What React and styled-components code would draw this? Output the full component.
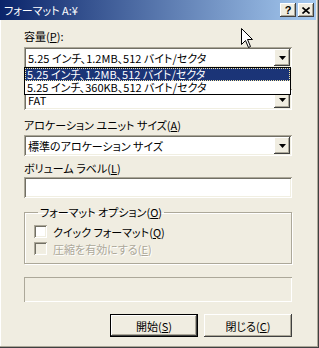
import React from 'react';
import styled, { createGlobalStyle } from 'styled-components';

const FACE = '#f0ede1';

const GlobalStyle = createGlobalStyle`
  html, body { margin: 0; padding: 0; background: ${FACE}; }
  body {
    font-family: "Noto Sans CJK JP", "Noto Sans", sans-serif;
    font-size: 11px;
    font-feature-settings: "palt";
    color: #000;
  }
`;

const Window = styled.div`
  position: relative;
  width: 319px;
  height: 348px;
  box-sizing: border-box;
  padding: 0 3px 3px 0;
  background: ${FACE};
  box-shadow: inset -1px -1px #404040, inset -2px -2px #aca899, inset 1px 0 #fff;
  display: flex;
  flex-direction: column;
  overflow: hidden;
`;

const TitleBar = styled.div`
  flex: none;
  height: 20px;
  display: flex;
  align-items: center;
  padding: 0 2px 0 4px;
  background: linear-gradient(to right, #0a246a, #a6caf0);
`;

const Title = styled.span`
  flex: 1;
  color: #fff;
  font-size: 11px;
  line-height: 20px;
`;

const raised = `
  box-shadow: inset -1px -1px #404040, inset 1px 1px #fff,
    inset -2px -2px #aca899, inset 2px 2px ${FACE};
`;

const CaptionButton = styled.button`
  width: 16px;
  height: 14px;
  padding: 0;
  margin-left: ${(p) => p.$gap || 0}px;
  border: none;
  background: ${FACE};
  ${raised}
  font: bold 11px "Liberation Sans", sans-serif;
  display: flex;
  align-items: center;
  justify-content: center;
  color: #000;
`;

const Body = styled.div`
  width: 268px;
  padding: 9px 0 0 24px;
  display: flex;
  flex-direction: column;
`;

const Label = styled.div`
  line-height: 14px;
  height: 14px;
  white-space: nowrap;
  margin-top: ${(p) => p.$mt || 0}px;
  margin-bottom: ${(p) => p.$mb ?? 3}px;
`;

const sunken = `
  box-shadow: inset 1px 1px #aca899, inset -1px -1px #fff,
    inset 2px 2px #716f64, inset -2px -2px #f1efe2;
`;

const Combo = styled.div`
  position: relative;
  height: 21px;
  box-sizing: border-box;
  padding: 2px;
  background: #fff;
  ${sunken}
  display: flex;
  align-items: center;
  z-index: ${(p) => (p.$open ? 2 : 1)};
`;

const ComboText = styled.span`
  flex: 1;
  padding-left: 2px;
  white-space: nowrap;
  overflow: hidden;
`;

const ArrowButton = styled.div`
  width: 16px;
  height: 17px;
  background: ${FACE};
  ${raised}
  display: flex;
  align-items: center;
  justify-content: center;
`;

const DropList = styled.div`
  position: absolute;
  top: 20px;
  left: 0;
  right: 1px;
  background: #fff;
  border: 1px solid #000;
  display: flex;
  flex-direction: column;
`;

const ListItem = styled.div`
  height: 13px;
  line-height: 13px;
  padding: 0 1px;
  white-space: nowrap;
  box-sizing: border-box;
  border: 1px dotted ${(p) => (p.$selected ? '#f6e7a0' : 'transparent')};
  background: ${(p) => (p.$selected ? '#1b3477' : '#fff')};
  color: ${(p) => (p.$selected ? '#fff' : '#000')};
  display: flex;
  align-items: center;
`;

const TextBox = styled.div`
  height: 21px;
  box-sizing: border-box;
  background: #fff;
  ${sunken}
`;

const Group = styled.fieldset`
  margin: 7px 0 0 0;
  padding: 6px 0 0 9px;
  height: 59px;
  box-sizing: border-box;
  min-inline-size: 0;
  border: 1px solid #aca899;
  box-shadow: 1px 1px 0 #fff, inset 1px 1px 0 #fff;
  display: flex;
  flex-direction: column;
  gap: 4px;
`;

const Legend = styled.legend`
  padding: 0 2px;
  margin-left: 4px;
  line-height: 14px;
`;

const CheckRow = styled.div`
  display: flex;
  align-items: center;
  height: 13px;
  gap: 6px;
  color: ${(p) => (p.$disabled ? '#aca899' : '#000')};
  text-shadow: ${(p) => (p.$disabled ? '1px 1px 0 #fff' : 'none')};
`;

const CheckBox = styled.span`
  width: 13px;
  height: 13px;
  box-sizing: border-box;
  flex: none;
  background: ${(p) => (p.$disabled ? FACE : '#fff')};
  ${sunken}
`;

const Progress = styled.div`
  margin-top: 13px;
  height: 25px;
  box-shadow: inset 1px 1px #aca899, inset -1px -1px #fff;
`;

const ButtonRow = styled.div`
  margin-top: 12px;
  display: flex;
  justify-content: flex-end;
  gap: 6px;
`;

const PushButton = styled.button`
  width: 88px;
  height: 23px;
  padding: 0;
  font: inherit;
  font-size: 11px;
  color: #000;
  background: ${FACE};
  border: ${(p) => (p.$default ? '1px solid #000' : 'none')};
  box-sizing: border-box;
  ${raised}
  cursor: default;
`;

const Cursor = styled.svg`
  position: absolute;
  left: 241px;
  top: 28px;
  z-index: 5;
`;

function Arrow() {
  return (
    <svg width="7" height="4" viewBox="0 0 7 4">
      <path d="M0 0h7L3.5 4z" fill="#000" />
    </svg>
  );
}

export default function App() {
  return (
    <Window>
      <GlobalStyle />
      <TitleBar>
        <Title>フォーマット A:¥</Title>
        <CaptionButton>?</CaptionButton>
        <CaptionButton $gap={2}>
          <svg width="8" height="7" viewBox="0 0 8 7">
            <path d="M0.5 0.5L7.5 6.5M7.5 0.5L0.5 6.5" stroke="#000" strokeWidth="1.6" />
          </svg>
        </CaptionButton>
      </TitleBar>

      <Body>
        <Label $mb={4}>
          容量(<u>P</u>):
        </Label>
        <Combo $open>
          <ComboText>5.25 インチ、1.2MB、512 バイト/セクタ</ComboText>
          <ArrowButton>
            <Arrow />
          </ArrowButton>
          <DropList>
            <ListItem $selected>5.25 インチ、1.2MB、512 バイト/セクタ</ListItem>
            <ListItem>5.25 インチ、360KB、512 バイト/セクタ</ListItem>
          </DropList>
        </Combo>

        {/* file system label sits under the open list */}
        <Label $mt={4} />
        <Combo>
          <ComboText>FAT</ComboText>
          <ArrowButton>
            <Arrow />
          </ArrowButton>
        </Combo>

        <Label $mt={8}>
          アロケーション ユニット サイズ(<u>A</u>)
        </Label>
        <Combo>
          <ComboText>標準のアロケーション サイズ</ComboText>
          <ArrowButton>
            <Arrow />
          </ArrowButton>
        </Combo>

        <Label $mt={5} $mb={2}>
          ボリューム ラベル(<u>L</u>)
        </Label>
        <TextBox />

        <Group>
          <Legend>
            フォーマット オプション(<u>O</u>)
          </Legend>
          <CheckRow>
            <CheckBox />
            <span>
              クイック フォーマット(<u>Q</u>)
            </span>
          </CheckRow>
          <CheckRow $disabled>
            <CheckBox $disabled />
            <span>
              圧縮を有効にする(<u>E</u>)
            </span>
          </CheckRow>
        </Group>

        <Progress />

        <ButtonRow>
          <PushButton $default>
            開始(<u>S</u>)
          </PushButton>
          <PushButton>
            閉じる(<u>C</u>)
          </PushButton>
        </ButtonRow>
      </Body>

      <Cursor width="13" height="21" viewBox="0 0 13 21">
        <path
          d="M0.5 0.5V16.5L4.5 12.5L7.5 19.5L9.5 18.5L6.5 11.5H11.5Z"
          fill="#fff"
          stroke="#000"
          strokeWidth="1"
          strokeLinejoin="miter"
        />
      </Cursor>
    </Window>
  );
}
